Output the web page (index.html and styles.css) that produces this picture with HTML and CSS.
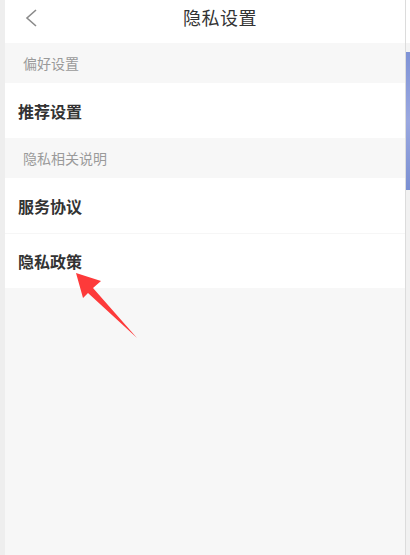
FILE: index.html
```html
<!DOCTYPE html>
<html lang="zh-CN">
<head>
<meta charset="utf-8">
<title>隐私设置</title>
<link rel="stylesheet" href="styles.css">
</head>
<body>
<div class="screen">
  <div class="left-strip"></div>
  <main class="page">
    <header class="nav">
      <svg class="back" width="14" height="18" viewBox="0 0 14 18"><path d="M12 1 L3 9 L12 17" fill="none" stroke="#8a8a8a" stroke-width="1.6"/></svg>
      <h1 class="title">隐私设置</h1>
    </header>
    <div class="section">偏好设置</div>
    <div class="row">推荐设置</div>
    <div class="section">隐私相关说明</div>
    <div class="row">服务协议</div>
    <div class="row sep">隐私政策</div>
    <div class="rest"></div>
  </main>
  <div class="right-strip">
    <div class="rs-top"></div>
    <div class="rs-gap"></div>
    <div class="rs-blue"></div>
    <div class="rs-rest"></div>
  </div>
  <svg class="arrow" width="410" height="555" viewBox="0 0 410 555"><polygon points="76,273 101,281 93,288 137,338 88,293 83,298" fill="#fd3a3a"/></svg>
</div>
</body>
</html>
```
FILE: styles.css
```css
html, body {
  margin: 0;
  padding: 0;
}
body {
  width: 410px;
  height: 555px;
  overflow: hidden;
  background: #efefef;
  font-family: "Noto Sans CJK SC", "Noto Sans", sans-serif;
}
.screen {
  position: relative;
  display: flex;
  width: 410px;
  height: 555px;
}
.left-strip {
  width: 5px;
  background: #eeeeee;
}
.page {
  width: 400px;
  display: flex;
  flex-direction: column;
  background: #f7f7f7;
}
.nav {
  height: 43px;
  background: #ffffff;
  display: flex;
  align-items: center;
  position: relative;
}
.back {
  margin-left: 19px;
  margin-top: -8px;
}
.title {
  margin: -10px 0 0 145px;
  font-size: 18px;
  font-weight: 400;
  color: #333333;
  line-height: 1;
  letter-spacing: 0.5px;
}
.section {
  height: 40px;
  display: flex;
  align-items: center;
  padding-left: 18px;
  font-size: 14px;
  color: #9a9a9a;
  background: #f7f7f7;
}
.row {
  height: 55px;
  box-sizing: border-box;
  display: flex;
  align-items: center;
  padding-left: 13px;
  font-size: 16px;
  font-weight: 700;
  color: #333333;
  background: #ffffff;
}
.row.sep {
  border-top: 1px solid #f6f6f6;
}
.rest {
  flex: 1;
  background: #f7f7f7;
}
.right-strip {
  width: 5px;
  display: flex;
  flex-direction: column;
  border-left: 1px solid #dcdcdc;
  box-sizing: border-box;
}
.rs-top {
  height: 43px;
  background: #ffffff;
}
.rs-gap {
  height: 9px;
  background: #f4f4f4;
}
.rs-blue {
  height: 138px;
  background: linear-gradient(180deg, #7f93d6, #9aa8e0 50%, #7a8fd2);
}
.rs-rest {
  flex: 1;
  background: #f1f1f1;
}
.arrow {
  position: absolute;
  left: 0;
  top: 0;
  pointer-events: none;
}
```
